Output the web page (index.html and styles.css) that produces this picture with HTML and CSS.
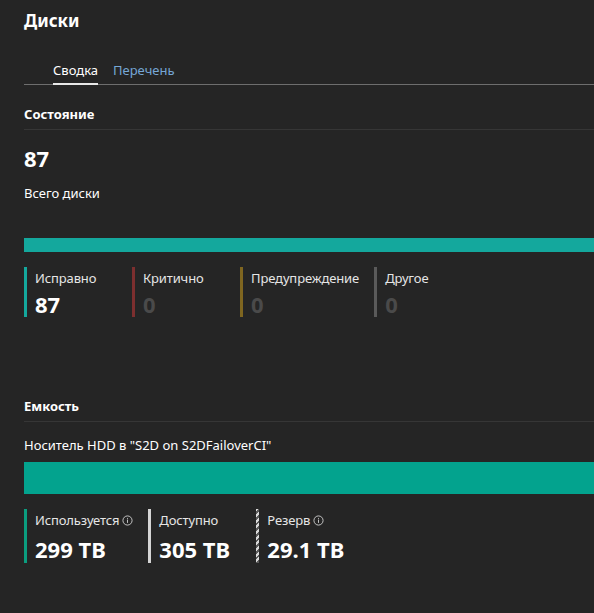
FILE: index.html
```html
<!DOCTYPE html>
<html lang="ru">
<head>
<meta charset="utf-8">
<title>Диски</title>
<link rel="stylesheet" href="styles.css">
</head>
<body>
<div class="page">
  <h1 class="title">Диски</h1>
  <div class="tabs">
    <span class="tab active">Сводка</span>
    <span class="tab">Перечень</span>
  </div>

  <section class="section">
    <h2 class="section-title">Состояние</h2>
    <div class="total">87</div>
    <div class="total-label">Всего диски</div>
    <div class="bar health-bar"></div>
    <div class="legend">
      <div class="item ok">
        <div class="label">Исправно</div>
        <div class="value">87</div>
      </div>
      <div class="item crit">
        <div class="label">Критично</div>
        <div class="value dim">0</div>
      </div>
      <div class="item warn">
        <div class="label">Предупреждение</div>
        <div class="value dim">0</div>
      </div>
      <div class="item other">
        <div class="label">Другое</div>
        <div class="value dim">0</div>
      </div>
    </div>
  </section>

  <section class="section cap-section">
    <h2 class="section-title">Емкость</h2>
    <div class="media-label">Носитель HDD в "S2D on S2DFailoverCI"</div>
    <div class="bar cap-bar"></div>
    <div class="legend cap-legend">
      <div class="item used">
        <div class="label">Используется <svg class="info" viewBox="0 0 12 12" width="11" height="11"><circle cx="6" cy="6" r="5" fill="none" stroke="currentColor" stroke-width="1"/><rect x="5.5" y="5" width="1" height="3.6" fill="currentColor"/><rect x="5.5" y="3.2" width="1" height="1" fill="currentColor"/></svg></div>
        <div class="value big">299 TB</div>
      </div>
      <div class="item avail">
        <div class="label">Доступно</div>
        <div class="value big">305 TB</div>
      </div>
      <div class="item reserve">
        <div class="label">Резерв <svg class="info" viewBox="0 0 12 12" width="11" height="11"><circle cx="6" cy="6" r="5" fill="none" stroke="currentColor" stroke-width="1"/><rect x="5.5" y="5" width="1" height="3.6" fill="currentColor"/><rect x="5.5" y="3.2" width="1" height="1" fill="currentColor"/></svg></div>
        <div class="value big">29.1 TB</div>
      </div>
    </div>
  </section>
</div>
</body>
</html>
```

FILE: styles.css
```css
html, body {
  margin: 0;
  padding: 0;
  background: #252525;
  color: #ffffff;
  font-family: "Segoe UI", "Noto Sans", "Open Sans", sans-serif;
  font-size: 13px;
}

.page {
  padding: 9px 0 0 24px;
}

.title {
  margin: 0;
  font-size: 17px;
  font-weight: 700;
  line-height: 24px;
}

.tabs {
  display: flex;
  gap: 15px;
  margin-top: 28px;
  padding-left: 29px;
  border-bottom: 1px solid #6e6e6e;
}

.tab {
  color: #76a7d6;
  line-height: 18px;
  padding-bottom: 5px;
}

.tab.active {
  color: #ffffff;
  border-bottom: 2px solid #e8e8e8;
  margin-bottom: -1px;
  padding-bottom: 4px;
}

.section-title {
  margin: 0;
  font-size: 13px;
  font-weight: 700;
  line-height: 18px;
  padding: 20px 0 6px;
  border-bottom: 1px solid #363636;
}

.total {
  font-size: 22px;
  font-weight: 700;
  line-height: 28px;
  margin-top: 14px;
}

.total-label {
  line-height: 18px;
  margin-top: 12px;
}

.bar {
  width: 100%;
}

.health-bar {
  height: 14px;
  background: #14a89d;
  margin-top: 36px;
}

.legend {
  display: flex;
  margin-top: 15px;
}

.item {
  border-left: 3px solid #14a89d;
  padding-left: 8px;
  margin-right: 15px;
  min-width: 82px;
  height: 50px;
  box-sizing: content-box;
}

.item .label {
  color: #e6e6e6;
  line-height: 18px;
  padding-top: 2px;
  display: flex;
  align-items: center;
  gap: 3px;
  letter-spacing: -0.12px;
}

.item .value {
  font-size: 22px;
  font-weight: 700;
  line-height: 28px;
  margin-top: 3px;
}

.item .value.dim {
  color: #4a4a4a;
}

.item.crit { border-left-color: #7d2f2f; }
.item.warn { border-left-color: #7f6620; }
.item.other { border-left-color: #5a5a5a; }

.cap-section {
  margin-top: 60px;
}

.media-label {
  line-height: 18px;
  margin-top: 14px;
}

.cap-bar {
  height: 32px;
  background: #03a38e;
  margin-top: 8px;
}

.cap-legend {
  margin-top: 15px;
}

.cap-legend .item {
  height: 54px;
}

.cap-legend .value.big {
  font-size: 22px;
  line-height: 30px;
  margin-top: 5px;
}

.item.used { border-left-color: #0b9d7f; }
.item.avail { border-left-color: #d4d4d4; }
.item.reserve {
  border-left: none;
  padding-left: 11px;
  background:
    repeating-linear-gradient(135deg, #d8d8d8 0 2px, #5a5a5a 2px 4px) left top / 3px 100% no-repeat;
}

.info {
  color: #d0d0d0;
  flex: none;
}
```
